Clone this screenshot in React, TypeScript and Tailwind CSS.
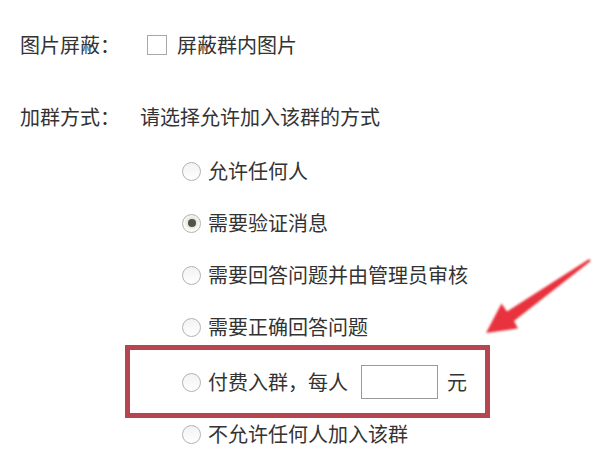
import React from "react";

const options = [
  { label: "允许任何人", checked: false },
  { label: "需要验证消息", checked: true },
  { label: "需要回答问题并由管理员审核", checked: false },
  { label: "需要正确回答问题", checked: false },
];

function Radio({ checked }: { checked?: boolean }) {
  return (
    <span className="flex h-[19px] w-[19px] shrink-0 items-center justify-center rounded-full border-[1.5px] border-[#b3b3b3] bg-gradient-to-b from-[#f2f2f2] to-white">
      {checked && (
        <span className="h-[8px] w-[8px] rounded-full bg-[#4f544b] shadow-[0_0_2px_2px_#dfe8d6]" />
      )}
    </span>
  );
}

function Arrow() {
  return (
    <svg
      className="pointer-events-none absolute left-0 top-0"
      width="604"
      height="451"
      viewBox="0 0 604 451"
    >
      <defs>
        <filter id="soft" x="-10%" y="-10%" width="120%" height="120%">
          <feGaussianBlur stdDeviation="0.8" />
        </filter>
      </defs>
      <polygon
        filter="url(#soft)"
        fill="#e8333d"
        points="590.8,260.9 514,321 518,328.5 486,333 501.5,303.5 507,311.5 589.2,258.9"
      />
    </svg>
  );
}

export default function App() {
  return (
    <div className="relative h-[451px] w-[604px] overflow-hidden bg-white pl-5 text-[20px] leading-none text-[#333] [font-family:'Noto_Sans_CJK_SC',sans-serif]">
      <div className="flex h-[30px] items-center mt-[30px]">
        <span className="w-[127px]">图片屏蔽：</span>
        <span className="h-[20px] w-[20px] border border-[#a8a8a8] bg-white" />
        <span className="ml-[10px]">屏蔽群内图片</span>
      </div>

      <div className="flex h-[30px] items-center mt-[42px]">
        <span className="w-[120px]">加群方式：</span>
        <span>请选择允许加入该群的方式</span>
      </div>

      <div className="ml-[162px] mt-[13px] flex flex-col">
        {options.map((o) => (
          <div key={o.label} className="flex h-[52px] items-center gap-[7px]">
            <Radio checked={o.checked} />
            <span>{o.label}</span>
          </div>
        ))}
        <div className="flex h-[58px] items-center gap-[7px]">
          <Radio />
          <span>付费入群，每人</span>
          <span className="ml-[6px] h-[34px] w-[77px] border border-[#9a9a9a] bg-white" />
          <span className="ml-[2px]">元</span>
        </div>
        <div className="flex h-[46px] items-center gap-[7px]">
          <Radio />
          <span>不允许任何人加入该群</span>
        </div>
      </div>

      {/* annotation overlay */}
      <div className="pointer-events-none absolute left-[125px] top-[345px] h-[73px] w-[365px] border-[5px] border-[#b7454f]" />
      <Arrow />
    </div>
  );
}
